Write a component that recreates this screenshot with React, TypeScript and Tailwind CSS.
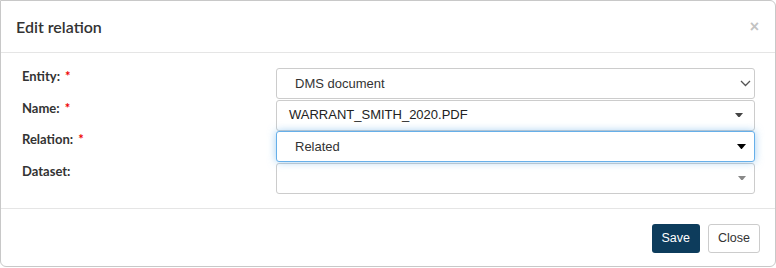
import React from "react";

interface IRelationRow {
  id: number;
  label: string;
  required: boolean;
  value: string;
  kind: "chevron" | "caret" | "caretFocus" | "caretEmpty";
}

const rows: IRelationRow[] = [
  { id: 1, label: "Entity:", required: true, value: "DMS document", kind: "chevron" },
  { id: 2, label: "Name:", required: true, value: "WARRANT_SMITH_2020.PDF", kind: "caret" },
  { id: 3, label: "Relation:", required: true, value: "Related", kind: "caretFocus" },
  { id: 4, label: "Dataset:", required: false, value: "", kind: "caretEmpty" },
];

const Caret: React.FC<{ color: string; w: number }> = ({ color, w }) => (
  <svg width={w} height={w * 0.6} viewBox="0 0 10 6">
    <path d="M0 0h10L5 6z" fill={color} />
  </svg>
);

const Chevron: React.FC = () => (
  <svg width="11" height="7" viewBox="0 0 11 7">
    <path d="M1 1l4.5 4.5L10 1" fill="none" stroke="#555" strokeWidth="1.3" />
  </svg>
);

const App: React.FC = () => {
  const renderRows = rows.map((row) => {
    const focus = row.kind === "caretFocus";
    return (
      <div key={row.id} className="flex h-[31.5px]">
        <div className="w-[275px] pl-[21px] -mt-[1px] text-[13px] font-bold text-[#333]">
          {row.label}
          {row.required && <span className="ml-[5px] text-[#e00]">*</span>}
        </div>
        <div
          className={
            focus
              ? "relative z-10 flex h-[31px] w-[479px] items-center justify-between rounded-[3px] border border-[#66afe9] bg-white shadow-[0_0_8px_rgba(102,175,233,0.6)]"
              : "flex h-[31px] w-[479px] items-center justify-between rounded-[3px] border border-[#ccc] bg-white"
          }
        >
          <span
            className={
              row.kind === "caret"
                ? "pl-[12px] text-[13px] text-[#222] font-['Liberation_Sans',sans-serif]"
                : "pl-[18px] text-[13px] text-[#333] font-['Liberation_Sans',sans-serif]"
            }
          >
            {row.value}
          </span>
          <span
            className={
              row.kind === "chevron"
                ? "pr-[3px] flex"
                : row.kind === "caret"
                ? "pr-[11px] flex"
                : "pr-[8px] flex"
            }
          >
            {row.kind === "chevron" && <Chevron />}
            {row.kind === "caret" && <Caret color="#444" w={8} />}
            {row.kind === "caretFocus" && <Caret color="#000" w={9} />}
            {row.kind === "caretEmpty" && <Caret color="#888" w={8} />}
          </span>
        </div>
      </div>
    );
  });

  return (
    <div className="w-[776px] h-[268px] bg-white font-['Lato',sans-serif]">
      <div className="flex h-[267px] w-[776px] flex-col rounded-tr-[6px] rounded-b-[6px] border border-[#c8c8c8] bg-white">
        <div className="flex h-[52px] items-center justify-between border-b border-[#e5e5e5] pl-[15px] pr-[16px]">
          <h4 className="text-[16px] font-semibold text-[#333]">Edit relation</h4>
          <span className="text-[16px] font-bold leading-none text-[#c3c3c3] font-['Liberation_Sans',sans-serif]">
            ×
          </span>
        </div>
        <div className="flex flex-col border-b border-[#e5e5e5] pt-[15px] pb-[14px]">
          {renderRows}
        </div>
        <div className="flex flex-1 items-start justify-end gap-[8px] pt-[15px] pr-[15px] font-['Liberation_Sans',sans-serif]">
          <button className="h-[29px] rounded-[3px] bg-[#0d3c5c] px-[10px] text-[12.5px] text-white">
            Save
          </button>
          <button className="h-[29px] rounded-[3px] border border-[#ccc] bg-white px-[9px] text-[12.5px] text-[#333]">
            Close
          </button>
        </div>
      </div>
    </div>
  );
};

export default App;
